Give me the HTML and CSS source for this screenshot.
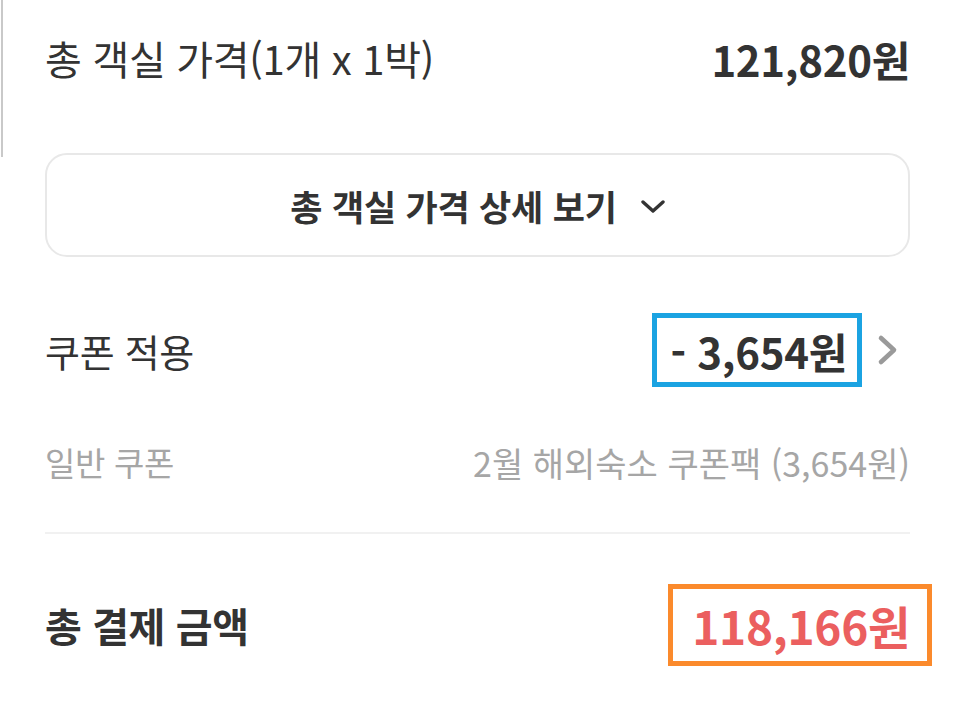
FILE: index.html
```html
<!DOCTYPE html>
<html lang="ko">
<head>
    <meta charset="UTF-8">
    <meta name="viewport" content="width=device-width, initial-scale=1.0">
    <link rel="stylesheet" href="styles.css">
</head>
<body>

<div class="sheet">
    <div class="row row-price">
        <span class="label">총 객실 가격(1개 x 1박)</span>
        <span class="amount">121,820원</span>
    </div>

    <button class="detail-btn">
        총 객실 가격 상세 보기
        <svg class="chev-down" width="24" height="14" viewBox="0 0 24 14">
            <path d="M2 2 L12 11 L22 2" fill="none" stroke="#333" stroke-width="3.4" stroke-linecap="round" stroke-linejoin="round"/>
        </svg>
    </button>

    <div class="row row-coupon">
        <span class="label coupon-label">쿠폰 적용</span>
        <span class="coupon-right">
            <span class="amount mark-blue">- 3,654원</span>
            <svg class="chev-right" width="22" height="32" viewBox="0 0 22 32">
                <path d="M4 4 L17 16 L4 28" fill="none" stroke="#9a9a9a" stroke-width="4.6" stroke-linecap="round" stroke-linejoin="round"/>
            </svg>
        </span>
    </div>

    <div class="row row-sub">
        <span>일반 쿠폰</span>
        <span class="coupon-name">2월 해외숙소 쿠폰팩 (3,654원)</span>
    </div>

    <div class="divider"></div>

    <div class="row row-total">
        <span class="label-bold">총 결제 금액</span>
        <span class="amount total mark-orange">118,166원</span>
    </div>
</div>

</body>
</html>
```

FILE: styles.css
```css
body {
    font-family: "Noto Sans CJK KR", "Noto Sans", sans-serif;
    margin: 0;
    padding: 0;
    background: #ffffff;
    color: #333333;
    overflow: hidden;
}

/* scroll edge on the left */
body::before {
    content: '';
    position: absolute;
    left: 1px;
    top: 0;
    width: 2px;
    height: 157px;
    background: #c9c9c9;
}

.sheet {
    padding: 0 56px 0 45px;
}

.row {
    display: flex;
    justify-content: space-between;
    align-items: center;
}

.row-price {
    height: 116px;
}

.label {
    font-size: 40px;
    letter-spacing: -0.3px;
}

.coupon-label {
    font-size: 38px;
}

.amount {
    font-size: 42px;
    font-weight: 700;
    letter-spacing: -0.3px;
}

.detail-btn {
    display: flex;
    align-items: center;
    justify-content: center;
    gap: 24px;
    width: 100%;
    height: 104px;
    margin-top: 37px;
    background: #ffffff;
    border: 2px solid #e8e8e8;
    border-radius: 22px;
    font-family: inherit;
    font-size: 35px;
    font-weight: 700;
    color: #333333;
    letter-spacing: -0.2px;
}

.chev-down {
    margin-top: 4px;
}

.row-coupon {
    height: 120px;
    margin-top: 33px;
}

.coupon-right {
    display: flex;
    align-items: center;
    gap: 15px;
    margin-right: 11px;
}

.mark-blue {
    border: 5px solid #1ba3e2;
    padding: 0 10px 0 14px;
    height: 64px;
    display: flex;
    align-items: center;
}

.row-sub {
    height: 104px;
    font-size: 33px;
    color: #a6a6a6;
    letter-spacing: -0.3px;
}

.coupon-name {
    font-size: 34px;
    letter-spacing: 0;
}

.divider {
    height: 2px;
    margin-top: 18px;
    background: #f1f1f1;
}

.row-total {
    height: 182px;
}

.label-bold {
    font-size: 40px;
    font-weight: 700;
    letter-spacing: -0.4px;
}

.total {
    font-size: 46px;
    color: #eb5f5f;
}

.mark-orange {
    border: 5px solid #fb8a2c;
    padding: 0 17px 0 19px;
    height: 72px;
    display: flex;
    align-items: center;
    margin-right: -22px;
}
```
